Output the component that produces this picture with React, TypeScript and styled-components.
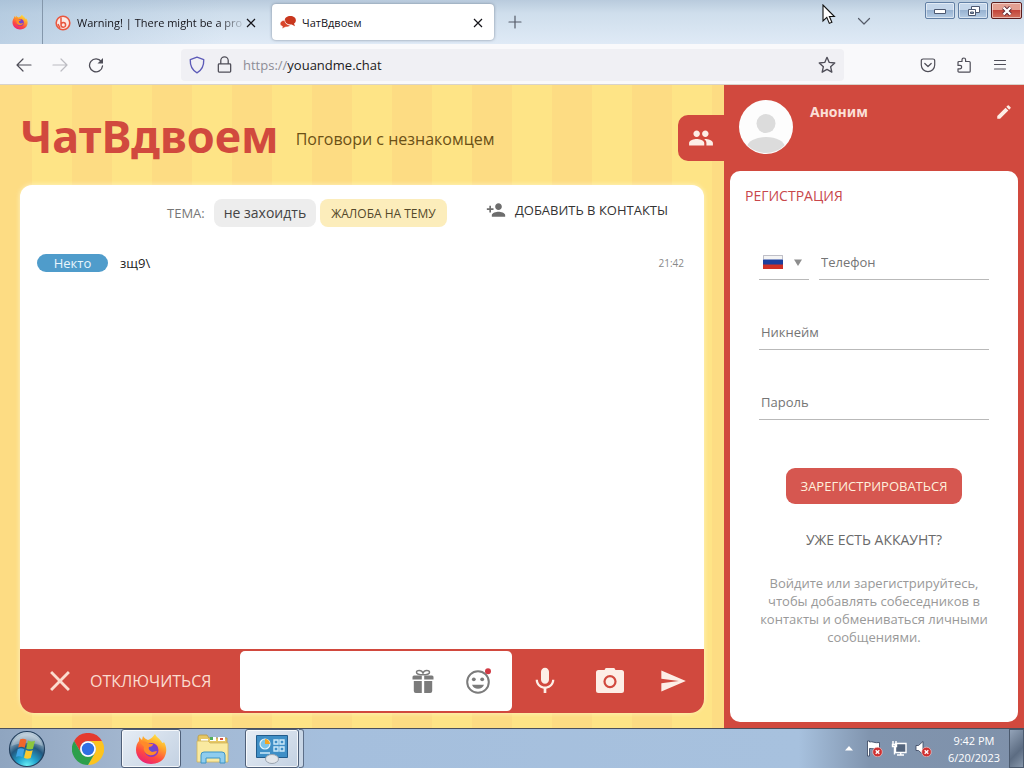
import React from "react";
import styled, { createGlobalStyle, css } from "styled-components";
import { MdPeople, MdEdit, MdPersonAdd, MdClose, MdMic, MdSend } from "react-icons/md";

const colors = {
  red: "#d1493e",
  redButton: "#d65750",
  cream: "#fdeee6",
  stripeDark: "#fddc83",
  stripeLight: "#fee486",
};

const GlobalStyle = createGlobalStyle`
  *, *::before, *::after { box-sizing: border-box; }
  body {
    margin: 0;
    font-family: "Open Sans", "Noto Sans", sans-serif;
    font-size: 13px;
    color: #222;
  }
  button, input, select { font: inherit; color: inherit; }
  button { padding: 0; border: 0; background: none; cursor: pointer; }
  svg { display: block; flex: none; }
`;

const Desktop = styled.div`
  min-height: 100vh;
  display: flex;
  flex-direction: column;
`;

/* ---------- Browser window ---------- */

const TitleBar = styled.header`
  position: relative;
  display: flex;
  align-items: stretch;
  height: 44px;
  background:
    linear-gradient(90deg, rgba(160, 188, 214, 0.55), rgba(160, 188, 214, 0) 22%),
    linear-gradient(180deg, #b9cbdd 0, #cfdeec 30%, #dfeaf6 100%);
`;

const PinnedTab = styled.button`
  display: grid;
  place-items: center;
  width: 43px;
  padding-right: 2px;
  border-right: 1px solid #8497ab;
`;

const Tab = styled.div<{ $active?: boolean }>`
  display: flex;
  align-items: center;
  gap: 6px;
  width: ${(p) => (p.$active ? 222 : 228)}px;
  margin: ${(p) => (p.$active ? "4px 0 4px 1px" : "4px 0")};
  padding: ${(p) => (p.$active ? "1px 8px 0" : "1px 12px 0")};
  border-radius: 4px;
  font-size: 11px;
  line-height: 16px;
  color: #15141a;
  ${(p) =>
    p.$active &&
    css`
      background: #fff;
      box-shadow: 0 0 3px rgba(70, 80, 100, 0.6);
    `}
`;

const TabLabel = styled.span<{ $fade?: boolean }>`
  flex: 1;
  white-space: nowrap;
  ${(p) =>
    p.$fade &&
    css`
      mask-image: linear-gradient(90deg, #000 85%, transparent 102%);
    `}
`;

const CloseTab = styled.button`
  display: grid;
  place-items: center;
  width: 16px;
  height: 16px;
  margin-left: -6px;
`;

const NewTab = styled.button`
  width: 42px;
  display: grid;
  place-items: center;
`;

const WindowControls = styled.div`
  display: flex;
  gap: 3px;
  margin-left: auto;
  padding: 2px 2px 0 0;
`;

const ListTabs = styled.button`
  display: grid;
  place-items: center;
  width: 36px;
  height: 38px;
  margin-right: 40px;
`;

const WindowButton = styled.button<{ $close?: boolean }>`
  display: grid;
  place-items: center;
  width: ${(p) => (p.$close ? 31 : 30)}px;
  height: 17px;
  border: 1px solid ${(p) => (p.$close ? "#5c1c1c" : "#6280a5")};
  border-radius: 2px;
  box-shadow: inset 0 0 0 1px rgba(255, 255, 255, 0.5);
  background: ${(p) =>
    p.$close
      ? "linear-gradient(#e3a092 0 45%, #c3453a 50%, #d2705c)"
      : "linear-gradient(#c4d6ea 0 45%, #98b3d1 50%, #b5cce4)"};
`;

const Pointer = styled.svg`
  position: absolute;
  top: 4px;
  right: 187px;
`;

const Toolbar = styled.nav`
  display: flex;
  align-items: center;
  height: 41px;
  padding: 1px 6px 0;
  background: #f9f9fb;
  border-bottom: 1px solid #d8d3cb;
`;

const ToolButton = styled.button<{ $dim?: boolean }>`
  display: grid;
  place-items: center;
  width: 36px;
  height: 32px;
  color: ${(p) => (p.$dim ? "#bcbcc2" : "#4f4e58")};
`;

const UrlBar = styled.form`
  flex: 1;
  display: flex;
  align-items: center;
  gap: 10px;
  height: 32px;
  margin: 0 66px 0 67px;
  padding: 0 8px 0 7px;
  border-radius: 4px;
  background: #f0f0f4;
  color: #4f4e58;
`;

const UrlField = styled.label`
  flex: 1;
  display: flex;
  font-size: 13px;
  line-height: 20px;
  color: #8d8d96;
`;

const UrlInput = styled.input`
  flex: 1;
  min-width: 0;
  padding: 0;
  border: 0;
  outline: 0;
  background: none;
  color: #1c1b22;
`;

/* ---------- Chat page ---------- */

const Page = styled.div`
  flex: 1;
  display: flex;
  background: repeating-linear-gradient(
    90deg,
    ${colors.stripeDark} 0 32px,
    ${colors.stripeLight} 32px 72px,
    ${colors.stripeDark} 72px 80px
  );
`;

const Main = styled.main`
  flex: 1;
  min-width: 0;
  display: flex;
  flex-direction: column;
  padding: 0 0 15px 20px;
`;

const Banner = styled.div`
  display: flex;
  align-items: center;
  height: 100px;
`;

const Logo = styled.h1`
  margin: 2px 0 0;
  font-family: "Noto Sans", sans-serif;
  font-weight: bold;
  font-size: 45px;
  line-height: 60px;
  color: ${colors.red};
`;

const Slogan = styled.p`
  margin: 8px 0 0 17px;
  font-size: 16px;
  line-height: 24px;
  color: #6b5016;
`;

const PeopleTab = styled.button`
  display: grid;
  place-items: center;
  width: 46px;
  height: 46px;
  margin: 6px 0 0 auto;
  border-radius: 10px 0 0 10px;
  background: ${colors.red};
  color: ${colors.cream};
`;

const ChatCard = styled.section`
  flex: 1;
  display: flex;
  flex-direction: column;
  margin-right: 20px;
  border-radius: 12px 12px 16px 16px;
  background: #fff;
  box-shadow: 0 0 5px rgba(255, 246, 205, 0.9);
`;

const TopicRow = styled.div`
  display: flex;
  align-items: center;
  height: 28px;
  margin-top: 14px;
  padding: 0 36px 0 147px;
`;

const TopicLabel = styled.span`
  margin-right: 9px;
  font-size: 13px;
  color: #777;
`;

const Topic = styled.span`
  padding: 0 10px;
  border-radius: 8px;
  background: #ededed;
  font-size: 14px;
  line-height: 28px;
  color: #444;
`;

const ReportButton = styled.button`
  height: 28px;
  margin-left: 4px;
  padding: 0 11px;
  border-radius: 8px;
  background: #fcedbb;
  font-size: 12px;
  color: #54482a;
`;

const AddContact = styled.button`
  display: flex;
  align-items: center;
  gap: 9px;
  height: 24px;
  margin: 0 0 6px auto;
  font-size: 13px;
  color: #333;

  svg { color: #6d6d6d; }
`;

const Messages = styled.ul`
  flex: 1;
  margin: 0;
  padding: 26px 20px 0 17px;
  list-style: none;
`;

const Message = styled.li`
  display: flex;
  align-items: center;
  line-height: 20px;
`;

const Author = styled.span`
  width: 71px;
  margin-right: 12px;
  border-radius: 9px;
  background: #4f9ccb;
  color: #e9f5fc;
  line-height: 18px;
  text-align: center;
`;

const Time = styled.time`
  margin-left: auto;
  font-size: 10px;
  color: #888;
`;

const Composer = styled.form`
  display: flex;
  align-items: stretch;
  height: 64px;
  padding: 2px 0;
  border-radius: 0 0 14px 14px;
  background: ${colors.red};
  color: ${colors.cream};
`;

const Disconnect = styled.button`
  flex: none;
  display: flex;
  align-items: center;
  gap: 13px;
  width: 220px;
  padding-left: 23px;
  font-size: 16px;
  color: #fbdccf;
`;

const Draft = styled.div`
  flex: 1;
  min-width: 0;
  display: flex;
  align-items: center;
  border-radius: 5px;
  background: #fff;
  color: #7b7b7b;
  padding-right: 5px;
`;

const DraftInput = styled.input`
  flex: 1;
  min-width: 0;
  height: 100%;
  padding: 0 12px;
  border: 0;
  outline: 0;
  background: none;
  color: #222;
`;

const IconButton = styled.button<{ $width: number }>`
  flex: none;
  display: grid;
  place-items: center;
  width: ${(p) => p.$width}px;
`;

/* ---------- Side panel ---------- */

const Sidebar = styled.aside`
  flex: none;
  display: flex;
  flex-direction: column;
  width: 300px;
  padding: 0 6px 6px;
  background: ${colors.red};
`;

const Profile = styled.div`
  display: flex;
  align-items: flex-start;
  height: 86px;
  padding: 15px 5px 0 9px;
  color: ${colors.cream};
`;

const UserName = styled.strong`
  flex: 1;
  margin: 2px 0 0 17px;
  font-family: "Noto Sans", sans-serif;
  font-size: 14px;
  line-height: 20px;
  color: #fbdfd6;
`;

const EditButton = styled.button`
  margin-top: 3px;
`;

const RegisterCard = styled.form`
  flex: 1;
  display: flex;
  flex-direction: column;
  padding: 15px 29px 0;
  border-radius: 10px;
  background: #fff;
`;

const RegisterTitle = styled.h2`
  margin: 0 0 43px -14px;
  font-size: 14px;
  font-weight: 400;
  line-height: 20px;
  color: #c8474b;
`;

const PhoneRow = styled.div`
  display: grid;
  grid-template-columns: 50px 1fr;
  gap: 10px;
`;

const Country = styled.div`
  display: grid;
  align-items: center;
  height: 31px;
  border-bottom: 1px solid #b9b9b9;

  > * { grid-area: 1 / 1; }
  > svg { pointer-events: none; margin: 0 0 4px 4px; }
`;

const CountrySelect = styled.select`
  width: 100%;
  height: 100%;
  border: 0;
  appearance: none;
  background: none;
`;

const Field = styled.input`
  width: 100%;
  height: 31px;
  margin-bottom: 39px;
  padding: 0 2px 4px;
  border: 0;
  border-bottom: 1px solid #b9b9b9;
  border-radius: 0;
  outline: 0;
  background: none;
  font-size: 13px;

  &::placeholder { color: #757575; opacity: 1; }
`;

const RegisterButton = styled.button`
  align-self: center;
  height: 36px;
  margin-top: 9px;
  padding: 0 15px;
  border-radius: 9px;
  background: ${colors.redButton};
  font-size: 13px;
  color: #fff0dc;
`;

const LoginLink = styled.a`
  align-self: center;
  margin: 26px 0 24px;
  font-size: 14px;
  line-height: 20px;
  color: #6a6a6a;
  text-decoration: none;
`;

const Hint = styled.p`
  margin: 0;
  font-size: 13px;
  line-height: 18px;
  text-align: center;
  color: #999;
`;

/* ---------- Taskbar ---------- */

const Taskbar = styled.footer`
  display: flex;
  align-items: stretch;
  height: 40px;
  border-top: 1px solid #4a4f5c;
  background: linear-gradient(90deg, #8fa5c0 0, #a2b6cf 12%, #a5bfdd 32%, #a7c1de 78%, #8094ae 85%, #7f91aa 100%);
`;

const TaskButton = styled.button<{ $width: number; $open?: boolean }>`
  display: grid;
  place-items: center;
  width: ${(p) => p.$width}px;
  ${(p) =>
    p.$open &&
    css`
      border: 1px solid #4f6079;
      border-radius: 3px;
      box-shadow: inset 0 0 0 1px rgba(255, 255, 255, 0.75);
      background: linear-gradient(135deg, #e6edf5, #c3d1e2);
    `}
`;

const StackEdge = styled.span`
  width: 5px;
  border: 1px solid #5c6e88;
  border-left: 0;
  border-radius: 0 3px 3px 0;
  background: #c8d6e6;
`;

const Tray = styled.div`
  display: flex;
  align-items: center;
  gap: 8px;
  margin-left: auto;
`;

const TrayArrow = styled.svg`
  margin-right: 5px;
`;

const Clock = styled.time`
  margin: 0 9px 0 8px;
  font-size: 11px;
  line-height: 17px;
  text-align: center;
  color: #fff;
`;

const ShowDesktop = styled.button`
  align-self: stretch;
  width: 15px;
  margin-left: -8px;
  border: 1px solid #4b5a6e;
  background: linear-gradient(135deg, #93a3b8, #5c6c82 60%, #8797ab);
`;

/* ---------- Drawings ---------- */

const FirefoxIcon = ({ size, id }: { size: number; id: string }) => (
  <svg width={size} height={size} viewBox="0 0 32 32" aria-hidden="true">
    <defs>
      <linearGradient id={`${id}-a`} x1="0.8" y1="0" x2="0.3" y2="1">
        <stop offset="0" stopColor="#fff04a" />
        <stop offset="0.35" stopColor="#ffa62b" />
        <stop offset="0.7" stopColor="#ff4a3f" />
        <stop offset="1" stopColor="#e8207a" />
      </linearGradient>
      <radialGradient id={`${id}-b`}>
        <stop offset="0" stopColor="#5b52d6" />
        <stop offset="1" stopColor="#8c35c4" />
      </radialGradient>
    </defs>
    <path
      fill={`url(#${id}-a)`}
      d="M20 1c1 3 4 4 6 7 1 1 1 2 2 2l1-1c3 5 3 11 0 16-3 4-8 6-13 6C8 31 1 25 1 17c0-4 1-7 3-9l0-4 3 3 1-4c1 2 3 3 5 4 3-1 5-3 7-6z"
    />
    <circle cx="16.500" cy="17" r="7" fill={`url(#${id}-b)`} />
    <path fill="#ff8a2a" d="M5 9c4-1 7 0 9 2h4c0 2-2 3-4 3-1 2 1 4 3 5 2 0 3-1 5-1-1 4-5 5-8 4-4-1-6-5-5-8-1-2-3-3-4-5z" />
  </svg>
);

const WarningFavicon = () => (
  <svg width="16" height="16" viewBox="0 0 16 16" aria-hidden="true">
    <circle cx="8" cy="8" r="6.800" fill="#fbe9e4" stroke="#e9573f" strokeWidth="1.600" />
    <path d="M6 2.500v6.500M6 10a2.300 2.300 0 1 0 2.300-2.400C7 7.600 6 8.600 6 10zM3 9l2 4" fill="none" stroke="#e9573f" strokeWidth="1.500" />
  </svg>
);

const ChatFavicon = () => (
  <svg width="16" height="13" viewBox="0 0 17 14" aria-hidden="true">
    <path fill="#c9371e" d="M11 0c3.500 0 6 2 6 4.600 0 1.700-.8 2.800-2 3.600l1 2.800-3.500-1.800C8 9.500 5 7.500 5 4.600 5 2 7.600 0 11 0z" />
    <path fill="#d8462b" stroke="#fff" strokeWidth=".6" d="M5 4.500c0 3 2.400 5 6 5.400-1 1.400-2.700 2-5 2L2 13.800l.6-2.500C1 10.600 0 9.600 0 8.200 0 6.200 2 4.600 5 4.500z" />
  </svg>
);

const CrossIcon = () => (
  <svg width="10" height="10" viewBox="0 0 10 10" fill="none" stroke="currentColor" strokeWidth="1.200" aria-hidden="true">
    <path d="M1 1l8 8M9 1L1 9" />
  </svg>
);

const LineIcon = ({ d, size = 16, color = "currentColor" }: { d: string; size?: number; color?: string }) => (
  <svg
    width={size}
    height={size}
    viewBox="0 0 16 16"
    fill="none"
    stroke={color}
    strokeWidth="1.200"
    strokeLinecap="round"
    strokeLinejoin="round"
    aria-hidden="true"
  >
    <path d={d} />
  </svg>
);

const ReloadIcon = () => (
  <svg width="16" height="16" viewBox="0 0 16 16" fill="none" stroke="currentColor" strokeWidth="1.300" aria-hidden="true">
    <path d="M13.300 4.500A6.500 6.500 0 1 0 14.500 9" strokeLinecap="round" />
    <path d="M15 1v5.500H9.500z" fill="currentColor" stroke="none" />
  </svg>
);

const CameraIcon = () => (
  <svg width="28" height="26" viewBox="0 0 28 26" aria-hidden="true">
    <path
      fill="currentColor"
      fillRule="evenodd"
      d="M8.500 2l1.200-2h8.600l1.200 2h6A2.500 2.500 0 0 1 28 4.500v18a2.500 2.500 0 0 1-2.500 2.500h-23A2.500 2.500 0 0 1 0 22.500v-18A2.500 2.500 0 0 1 2.500 2zM14 7a6.600 6.600 0 1 0 0 13.200A6.600 6.600 0 0 0 14 7zm0 2.200a4.400 4.400 0 1 1 0 8.800 4.400 4.400 0 0 1 0-8.800z"
    />
  </svg>
);

const GiftIcon = () => (
  <svg width="22" height="24" viewBox="0 0 22 24" aria-hidden="true">
    <path
      fill="currentColor"
      d="M2 6.500h7.800v4H.5V8A1.500 1.500 0 0 1 2 6.500zM12.200 6.500H20A1.500 1.500 0 0 1 21.500 8v2.500h-9.300zM1.800 12h8v12h-6a2 2 0 0 1-2-2zM12.200 12h8v10a2 2 0 0 1-2 2h-6z"
    />
    <path
      fill="none"
      stroke="currentColor"
      strokeWidth="1.500"
      d="M11 5.800C8 5.800 4.500 5.300 4.500 3.300 4.500 1 9.700.6 11 4c1.300-3.400 6.500-3 6.500-.7 0 2-3.500 2.500-6.500 2.500z"
    />
  </svg>
);

const SmileIcon = () => (
  <svg width="26" height="26" viewBox="0 0 26 26" aria-hidden="true">
    <circle cx="12" cy="14" r="10.800" fill="none" stroke="currentColor" strokeWidth="2" />
    <circle cx="7.800" cy="11.300" r="1.900" fill="currentColor" />
    <circle cx="16.200" cy="11.300" r="1.900" fill="currentColor" />
    <path fill="currentColor" d="M6 16.800h12c-.9 2.600-3.200 4-6 4s-5.100-1.400-6-4z" />
    <circle cx="22" cy="3.200" r="3" fill="#d13a44" />
  </svg>
);

const AvatarIcon = () => (
  <svg width="54" height="54" viewBox="0 0 54 54" aria-hidden="true">
    <defs>
      <clipPath id="avatar-clip">
        <circle cx="27" cy="27" r="26" />
      </clipPath>
    </defs>
    <circle cx="27" cy="27" r="27" fill="#fdfdfd" />
    <circle cx="27" cy="23.500" r="9.500" fill="#dcdcdc" />
    <ellipse cx="27" cy="47.500" rx="19" ry="10.500" fill="#dcdcdc" clipPath="url(#avatar-clip)" />
  </svg>
);

const CountryFlag = () => (
  <svg width="41" height="14" viewBox="0 0 41 14" aria-hidden="true">
    <path fill="#f4f4f4" d="M0 0h20v5H0z" />
    <path fill="#1c3f9e" d="M0 4.500h20V10H0z" />
    <path fill="#cf3127" d="M0 9.500h20V14H0z" />
    <path fill="none" stroke="#8a8a9a" strokeOpacity=".5" d="M.5 4V.5h19V4" />
    <path fill="#8d8d8d" d="M31 4.500h8L35 11z" />
  </svg>
);

const StartOrb = () => (
  <svg width="38" height="38" viewBox="0 0 38 38" aria-hidden="true">
    <defs>
      <radialGradient id="orb" cx="0.5" cy="1" r="0.95">
        <stop offset="0" stopColor="#6ff5f8" />
        <stop offset="0.3" stopColor="#22a5cf" />
        <stop offset="0.6" stopColor="#22587f" />
        <stop offset="0.85" stopColor="#8fa9bd" />
        <stop offset="1" stopColor="#b9cbd9" />
      </radialGradient>
    </defs>
    <circle cx="19" cy="19" r="17.500" fill="url(#orb)" stroke="#24405e" strokeWidth="1.200" />
    <path fill="#fff" fillOpacity=".25" d="M3.500 16a16 16 0 0 1 31 0c-9-4-22-4-31 0z" />
    <path fill="#f1662c" d="M12 9.500c2-1.200 4.500-.9 6.500.2l-1.800 8c-2-1.100-4.300-1.300-6.500-.2z" />
    <path fill="#8cc63e" d="M20 10.500c2.200 1.100 4.600 1.200 7 .2l-2 8c-2.300.9-4.600.8-6.800-.3z" />
    <path fill="#3fa4e6" d="M9.800 19c2.200-1.100 4.500-.9 6.500.2l-1.900 7.800c-2-1-4.300-1.200-6.400-.2z" />
    <path fill="#fcc92d" d="M17.900 20c2.100 1.100 4.500 1.200 6.800.3l-2 7.700c-2.300 1-4.700.9-6.700-.2z" />
  </svg>
);

const ChromeIcon = () => (
  <svg width="32" height="32" viewBox="0 0 32 32" aria-hidden="true">
    <path fill="#e53b2e" d="M2.100 8A16 16 0 0 1 29.900 8H16a8 8 0 0 0-6.900 12z" />
    <path fill="#fcc31e" d="M29.900 8A16 16 0 0 1 16 32l6.900-12A8 8 0 0 0 16 8z" />
    <path fill="#2c9f4b" d="M16 32A16 16 0 0 1 2.100 8l7 12a8 8 0 0 0 13.800 0z" />
    <circle cx="16" cy="16" r="7.800" fill="#fff" />
    <circle cx="16" cy="16" r="6.200" fill="#2f6fe4" />
  </svg>
);

const ExplorerIcon = () => (
  <svg width="34" height="30" viewBox="0 0 34 30" aria-hidden="true">
    <path fill="#e6c765" stroke="#b89a45" strokeWidth=".8" d="M2 3a2 2 0 0 1 2-2h7l2 3h18v22H2z" />
    <path fill="#fff" d="M5 5h7v3H5zM14 3h6v4h-6zM22 3h7v4h-7z" />
    <path fill="#4fae5b" d="M14 3h3v3h-3z" />
    <path fill="#d94f3d" d="M24 4h3v2h-3z" />
    <path fill="#f9e9a0" stroke="#d0b45c" strokeWidth=".8" d="M1 7h11l2 2h18v19H1z" />
    <path fill="#8fcdee" stroke="#3d94c6" d="M5 29v-8a3 3 0 0 1 3-3h18a3 3 0 0 1 3 3v8h-5v-5H10v5z" />
  </svg>
);

const ControlPanelIcon = () => (
  <svg width="34" height="30" viewBox="0 0 34 30" aria-hidden="true">
    <path fill="#3f8fc6" stroke="#225c8c" d="M1.500 1.500h31v22h-31z" />
    <circle cx="10" cy="10" r="5" fill="#7cc4ea" stroke="#e5f4fc" strokeWidth="1.200" />
    <path fill="#f5a623" d="M10 10V5a5 5 0 0 1 5 5z" />
    <path fill="none" stroke="#cdeafa" strokeWidth="1.400" d="M19 6h4v4h-4zM25 6h4v4h-4zM19 13h4v4h-4zM25 13h4v4h-4zM5 19h10" />
    <ellipse cx="17" cy="25" rx="6.500" ry="4.500" fill="#e3e6ea" stroke="#9aa4b0" />
  </svg>
);

const TrayBadge = () => (
  <g>
    <circle cx="11.500" cy="12" r="4.800" fill="#cf3030" stroke="#f3d7d7" strokeWidth=".6" />
    <path d="M9.700 10.200l3.600 3.600M13.300 10.200l-3.600 3.600" stroke="#fff" strokeWidth="1.400" />
  </g>
);

const FlagTrayIcon = () => (
  <svg width="17" height="17" viewBox="0 0 17 17" aria-hidden="true">
    <path fill="#fff" stroke="#33405a" strokeWidth=".8" d="M1.500 1h2v1c3-1 5 1.500 10 .5V9c-4 1-7-1-10-.5V16h-2z" />
    <TrayBadge />
  </svg>
);

const NetworkTrayIcon = () => (
  <svg width="16" height="17" viewBox="0 0 16 17" aria-hidden="true">
    <path fill="#54657d" stroke="#fff" strokeWidth="1.400" d="M4.500 3.500h10.500v9H4.500z" />
    <path fill="none" stroke="#fff" strokeWidth="1.400" d="M2 1v3M5 1v3M1.500 4.500h4v2h-4zM3.500 7v7.500M6 15h7M9.700 13v2" />
  </svg>
);

const SoundTrayIcon = () => (
  <svg width="17" height="17" viewBox="0 0 17 17" aria-hidden="true">
    <path fill="#fff" stroke="#33405a" strokeWidth=".8" d="M1 5.500h2.500L8 1.500v13l-4.500-4H1z" />
    <TrayBadge />
  </svg>
);

export default function App() {
  return (
    <Desktop>
      <GlobalStyle />

      <TitleBar>
        <PinnedTab aria-label="Firefox">
          <FirefoxIcon size={16} id="fx-tab" />
        </PinnedTab>
        <Tab>
          <WarningFavicon />
          <TabLabel $fade>Warning! | There might be a pro</TabLabel>
          <CloseTab aria-label="Close tab">
            <CrossIcon />
          </CloseTab>
        </Tab>
        <Tab $active>
          <ChatFavicon />
          <TabLabel>ЧатВдвоем</TabLabel>
          <CloseTab aria-label="Close tab">
            <CrossIcon />
          </CloseTab>
        </Tab>
        <NewTab aria-label="New tab">
          <LineIcon d="M8 2v12M2 8h12" color="#555b68" />
        </NewTab>
        <WindowControls>
          <ListTabs aria-label="List all tabs">
            <LineIcon d="M2.500 5.500l5.500 5.500 5.500-5.500" color="#555b68" />
          </ListTabs>
          <WindowButton aria-label="Minimize">
            <svg width="12" height="6" viewBox="0 0 12 6">
              <path fill="#fff" stroke="#4c5870" d="M.5 1.500h11v4H.5z" />
            </svg>
          </WindowButton>
          <WindowButton aria-label="Restore">
            <svg width="13" height="12" viewBox="0 0 13 12">
              <path fill="#fff" stroke="#4c5870" d="M4.500 1.500h8v6h-8z" />
              <path fill="#fff" stroke="#4c5870" d="M1.500 4.500h7v6h-7z" />
              <path fill="#8fa6c2" stroke="#4c5870" d="M3.500 7h3v1.500h-3z" />
            </svg>
          </WindowButton>
          <WindowButton $close aria-label="Close">
            <svg width="12" height="10" viewBox="0 0 12 10">
              <path d="M2.500 1.500l7 7M9.500 1.500l-7 7" stroke="#5a2530" strokeWidth="4" />
              <path d="M2.500 1.500l7 7M9.500 1.500l-7 7" stroke="#fff" strokeWidth="2.400" />
            </svg>
          </WindowButton>
        </WindowControls>
        <Pointer width="16" height="22" viewBox="0 0 16 22" aria-hidden="true">
          <path fill="#fff" stroke="#111" strokeWidth="1.100" d="M2 1v16l3.800-3.600 2.500 6 2.600-1.100-2.500-5.800h5z" />
        </Pointer>
      </TitleBar>

      <Toolbar>
        <ToolButton aria-label="Back">
          <LineIcon d="M15 8H1M7 2L1 8l6 6" />
        </ToolButton>
        <ToolButton $dim aria-label="Forward">
          <LineIcon d="M1 8h14M9 2l6 6-6 6" />
        </ToolButton>
        <ToolButton aria-label="Reload">
          <ReloadIcon />
        </ToolButton>
        <UrlBar onSubmit={(e) => e.preventDefault()}>
          <LineIcon size={18} color="#5d5bb8" d="M8 1l6 2.200c.2 5.400-1.600 9.500-6 11.800-4.400-2.300-6.200-6.400-6-11.800z" />
          <LineIcon size={17} d="M3 7.500h10a.8.8 0 0 1 .8.800v6a.8.8 0 0 1-.8.800H3a.8.8 0 0 1-.8-.8v-6A.8.8 0 0 1 3 7.500zM4.500 7.500V4.300a3.500 3.500 0 0 1 7 0v3.200" />
          <UrlField>
            https://
            <UrlInput aria-label="Address" defaultValue="youandme.chat" />
          </UrlField>
          <LineIcon size={18} d="M8 1.200l2 4.500 4.900.5-3.700 3.300 1.100 4.900L8 11.900l-4.300 2.500 1.100-4.900L1.100 6.200 6 5.700z" />
        </UrlBar>
        <ToolButton aria-label="Pocket">
          <LineIcon d="M3 2h10a1.700 1.700 0 0 1 1.700 1.700V8a6.700 6.700 0 0 1-13.400 0V3.700A1.700 1.700 0 0 1 3 2zM4.800 6.500L8 9.500l3.200-3" />
        </ToolButton>
        <ToolButton aria-label="Extensions">
          <LineIcon d="M6 4.500V2.800a1.800 1.800 0 0 1 3.600 0v1.700h3.600a1 1 0 0 1 1 1V14.200a1 1 0 0 1-1 1H3a1 1 0 0 1-1-1v-2.400h2a1.700 1.700 0 0 0 0-3.400H2V5.500a1 1 0 0 1 1-1z" />
        </ToolButton>
        <ToolButton aria-label="Menu">
          <LineIcon d="M2.500 3.500h11M2.500 7.500h11M2.500 12h11" />
        </ToolButton>
      </Toolbar>

      <Page>
        <Main>
          <Banner>
            <Logo>ЧатВдвоем</Logo>
            <Slogan>Поговори с незнакомцем</Slogan>
            <PeopleTab aria-label="Контакты">
              <MdPeople size={26} />
            </PeopleTab>
          </Banner>

          <ChatCard>
            <TopicRow>
              <TopicLabel>ТЕМА:</TopicLabel>
              <Topic>не захоидть</Topic>
              <ReportButton>ЖАЛОБА НА ТЕМУ</ReportButton>
              <AddContact>
                <MdPersonAdd size={20} />
                ДОБАВИТЬ В КОНТАКТЫ
              </AddContact>
            </TopicRow>
            <Messages>
              <Message>
                <Author>Некто</Author>
                <span>зщ9\</span>
                <Time>21:42</Time>
              </Message>
            </Messages>
            <Composer onSubmit={(e) => e.preventDefault()}>
              <Disconnect type="button">
                <MdClose size={34} />
                ОТКЛЮЧИТЬСЯ
              </Disconnect>
              <Draft>
                <DraftInput aria-label="Сообщение" />
                <IconButton $width={56} type="button" aria-label="Подарок">
                  <GiftIcon />
                </IconButton>
                <IconButton $width={56} type="button" aria-label="Смайлы">
                  <SmileIcon />
                </IconButton>
              </Draft>
              <IconButton $width={66} type="button" aria-label="Голосовое сообщение">
                <MdMic size={32} />
              </IconButton>
              <IconButton $width={64} type="button" aria-label="Фото">
                <CameraIcon />
              </IconButton>
              <IconButton $width={62} aria-label="Отправить">
                <MdSend size={28} />
              </IconButton>
            </Composer>
          </ChatCard>
        </Main>

        <Sidebar>
          <Profile>
            <AvatarIcon />
            <UserName>Аноним</UserName>
            <EditButton aria-label="Изменить имя">
              <MdEdit size={18} />
            </EditButton>
          </Profile>
          <RegisterCard onSubmit={(e) => e.preventDefault()}>
            <RegisterTitle>РЕГИСТРАЦИЯ</RegisterTitle>
            <PhoneRow>
              <Country>
                <CountrySelect aria-label="Страна">
                  <option value="ru" aria-label="Россия" />
                </CountrySelect>
                <CountryFlag />
              </Country>
              <Field type="tel" aria-label="Телефон" placeholder="Телефон" />
            </PhoneRow>
            <Field aria-label="Никнейм" placeholder="Никнейм" />
            <Field type="password" aria-label="Пароль" placeholder="Пароль" />
            <RegisterButton>ЗАРЕГИСТРИРОВАТЬСЯ</RegisterButton>
            <LoginLink href="#login">УЖЕ ЕСТЬ АККАУНТ?</LoginLink>
            <Hint>
              Войдите или зарегистрируйтесь, чтобы добавлять собеседников в контакты и обмениваться личными
              сообщениями.
            </Hint>
          </RegisterCard>
        </Sidebar>
      </Page>

      <Taskbar>
        <TaskButton $width={54} aria-label="Start">
          <StartOrb />
        </TaskButton>
        <TaskButton $width={67} aria-label="Chrome">
          <ChromeIcon />
        </TaskButton>
        <TaskButton $width={60} $open aria-label="Firefox">
          <FirefoxIcon size={32} id="fx-task" />
        </TaskButton>
        <TaskButton $width={64} aria-label="Explorer">
          <ExplorerIcon />
        </TaskButton>
        <TaskButton $width={54} $open aria-label="Control Panel">
          <ControlPanelIcon />
        </TaskButton>
        <StackEdge />
        <Tray>
          <TrayArrow width="8" height="5" viewBox="0 0 8 5" aria-hidden="true">
            <path fill="#fff" d="M4 0l4 4.500H0z" />
          </TrayArrow>
          <FlagTrayIcon />
          <NetworkTrayIcon />
          <SoundTrayIcon />
          <Clock>
            9:42 PM
            <br />
            6/20/2023
          </Clock>
          <ShowDesktop aria-label="Show desktop" />
        </Tray>
      </Taskbar>
    </Desktop>
  );
}
